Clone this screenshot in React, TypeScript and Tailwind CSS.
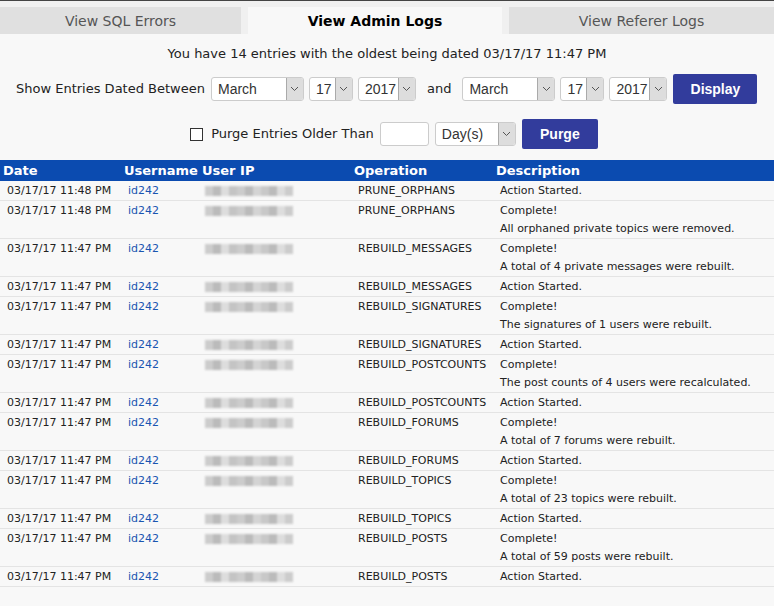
import React from "react";

const rows: [string, string, string?][] = [
  ["03/17/17 11:48 PM", "PRUNE_ORPHANS|Action Started."],
  ["03/17/17 11:48 PM", "PRUNE_ORPHANS|Complete!", "All orphaned private topics were removed."],
  ["03/17/17 11:47 PM", "REBUILD_MESSAGES|Complete!", "A total of 4 private messages were rebuilt."],
  ["03/17/17 11:47 PM", "REBUILD_MESSAGES|Action Started."],
  ["03/17/17 11:47 PM", "REBUILD_SIGNATURES|Complete!", "The signatures of 1 users were rebuilt."],
  ["03/17/17 11:47 PM", "REBUILD_SIGNATURES|Action Started."],
  ["03/17/17 11:47 PM", "REBUILD_POSTCOUNTS|Complete!", "The post counts of 4 users were recalculated."],
  ["03/17/17 11:47 PM", "REBUILD_POSTCOUNTS|Action Started."],
  ["03/17/17 11:47 PM", "REBUILD_FORUMS|Complete!", "A total of 7 forums were rebuilt."],
  ["03/17/17 11:47 PM", "REBUILD_FORUMS|Action Started."],
  ["03/17/17 11:47 PM", "REBUILD_TOPICS|Complete!", "A total of 23 topics were rebuilt."],
  ["03/17/17 11:47 PM", "REBUILD_TOPICS|Action Started."],
  ["03/17/17 11:47 PM", "REBUILD_POSTS|Complete!", "A total of 59 posts were rebuilt."],
  ["03/17/17 11:47 PM", "REBUILD_POSTS|Action Started."],
];

function Sel({ v, w }: { v: string; w: number }) {
  return (
    <div className="flex shrink-0 h-[24px] items-center border border-[#ccc] bg-white rounded-[3px] overflow-hidden" style={{ width: w }}>
      <span className="flex-1 pl-[6px] text-[14px] text-[#333] whitespace-nowrap" style={{ fontFamily: "'Liberation Sans', Arial, sans-serif" }}>{v}</span>
      <span className="w-[17px] shrink-0 h-full bg-[#ddd] border-l border-[#aaa] flex items-center justify-center">
        <svg width="9" height="6" viewBox="0 0 9 6"><path d="M1 1l3.5 3.5L8 1" stroke="#555" fill="none" /></svg>
      </span>
    </div>
  );
}

function IP() {
  const c = ["#ccc", "#bbb", "#ddd", "#c4c4c4", "#ccc", "#bbb", "#d4d4d4", "#c8c8c8", "#bbb", "#ddd", "#ccc"];
  return (
    <div className="flex h-[10px] mt-[2px] blur-[1.2px]">
      {c.map((x, i) => <div key={i} className="w-[8px] h-full" style={{ background: x }} />)}
    </div>
  );
}

export default function App() {
  return (
    <div className="w-[774px] h-[606px] bg-[#f8f8f8] border-t border-[#444] overflow-hidden leading-[16px]" style={{ fontFamily: "'DejaVu Sans', Verdana, sans-serif" }}>
      <div className="flex gap-[7px] h-[33px] pt-[6px] bg-[#f0f0f0]">
        <div className="w-[241px] bg-[#e0e0e0] flex items-center justify-center text-[14px] text-[#555]">View SQL Errors</div>
        <div className="w-[254px] bg-[#f8f8f8] flex items-center justify-center text-[14px] font-bold text-black">View Admin Logs</div>
        <div className="flex-1 bg-[#e0e0e0] flex items-center justify-center text-[14px] text-[#555]">View Referer Logs</div>
      </div>
      <div className="text-center text-[13px] text-[#222] mt-[12px]">You have 14 entries with the oldest being dated 03/17/17 11:47 PM</div>
      <div className="flex items-center gap-[5px] mt-[12px] pl-[16px] text-[13px] text-[#222] whitespace-nowrap">
        <span className="mr-[1px]">Show Entries Dated Between</span>
        <Sel v="March" w={93} /><Sel v="17" w={44} /><Sel v="2017" w={58} />
        <span className="mx-[6px]">and</span>
        <Sel v="March" w={93} /><Sel v="17" w={44} /><Sel v="2017" w={58} />
        <button className="ml-[1px] shrink-0 w-[84px] h-[30px] bg-[#323c9c] text-white font-bold text-[14px] rounded-[2px]" style={{ fontFamily: "'Liberation Sans', Arial, sans-serif" }}>Display</button>
      </div>
      <div className="flex items-center justify-center gap-[6px] mt-[15px] text-[13px] text-[#222] pl-[14px] whitespace-nowrap">
        <span className="w-[13px] h-[13px] border border-[#333] bg-white mr-[2px]" />
        <span>Purge Entries Older Than</span>
        <div className="w-[49px] h-[24px] border border-[#ccc] bg-white rounded-[3px]" />
        <Sel v="Day(s)" w={81} />
        <button className="w-[76px] h-[30px] bg-[#323c9c] text-white font-bold text-[14px] rounded-[2px]" style={{ fontFamily: "'Liberation Sans', Arial, sans-serif" }}>Purge</button>
      </div>
      <div className="mt-[11px] h-[21px] bg-[#0b4bb0] text-white font-bold text-[13px] flex items-center pl-[3px]">
        <span className="w-[121px]">Date</span>
        <span className="w-[78px]">Username</span>
        <span className="w-[152px]">User IP</span>
        <span className="w-[142px]">Operation</span>
        <span>Description</span>
      </div>
      {rows.map(([d, od, l2], i) => {
        const [op, desc] = od.split("|");
        return (
          <div key={i} className="flex border-b border-[#e4e4e4] text-[11px] leading-[14px] text-[#222] pt-[3px] pl-[7px]" style={{ height: l2 ? 38 : 20 }}>
            <span className="w-[121px]">{d}</span>
            <span className="w-[77px] text-[#1a55b0]">id242</span>
            <span className="w-[153px]"><IP /></span>
            <span className="w-[142px]">{op}</span>
            <div className="flex flex-col gap-[4px]"><span>{desc}</span>{l2 && <span>{l2}</span>}</div>
          </div>
        );
      })}
    </div>
  );
}
